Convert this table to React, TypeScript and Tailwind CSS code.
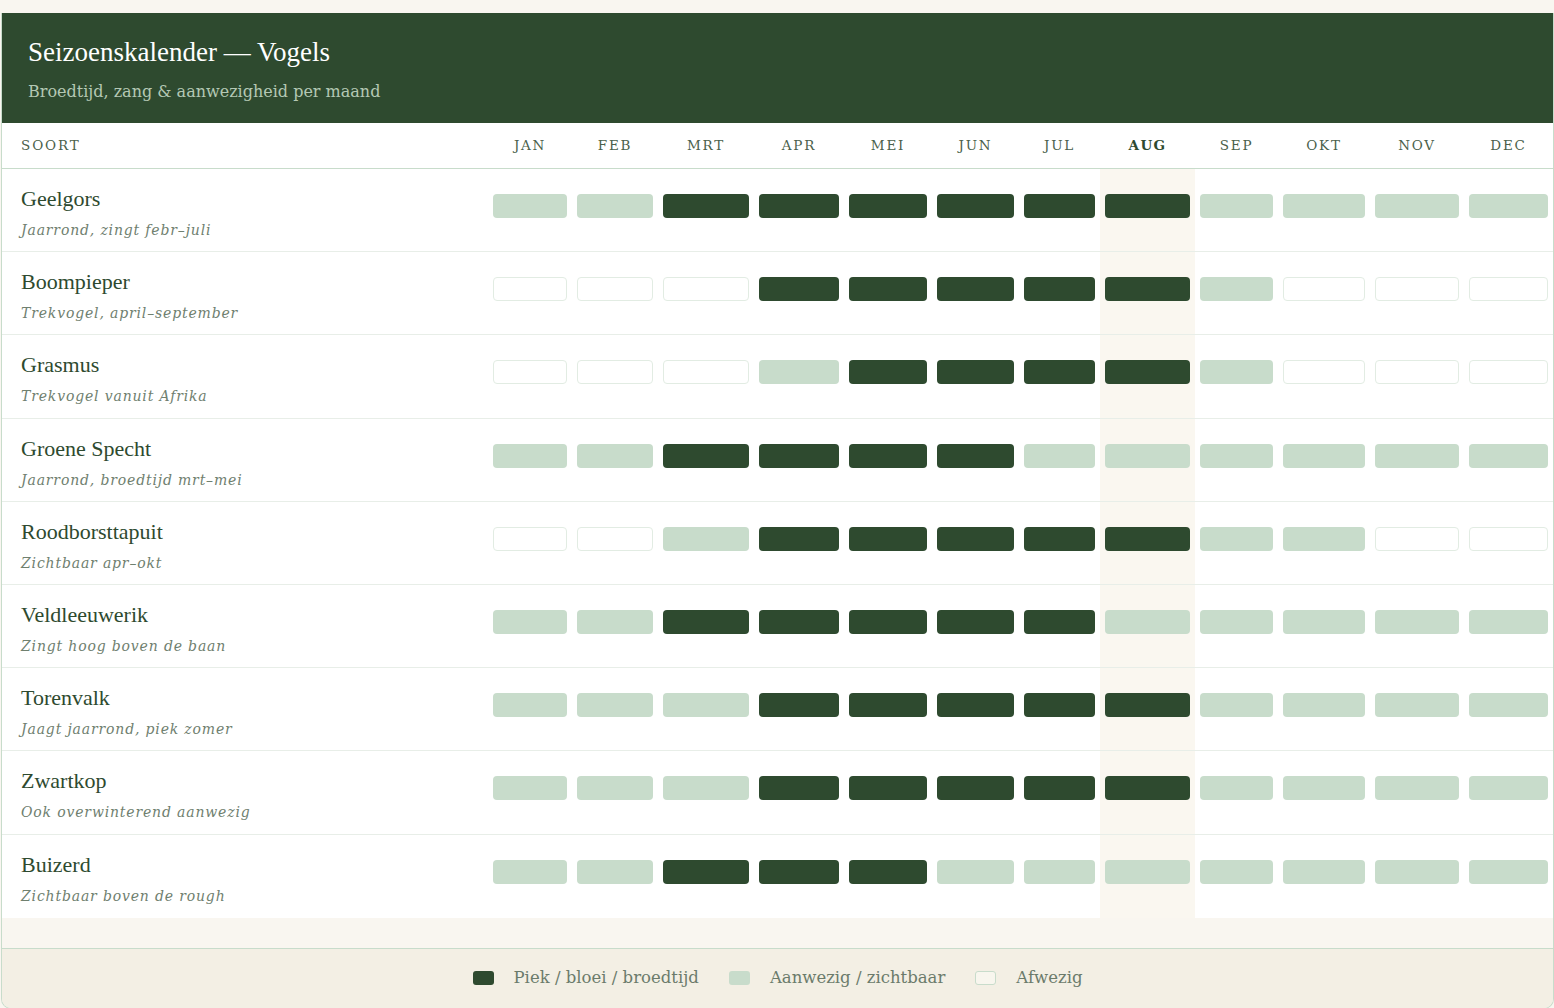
type Level = 'D' | 'L' | 'E'

const months = ['JAN', 'FEB', 'MRT', 'APR', 'MEI', 'JUN', 'JUL', 'AUG', 'SEP', 'OKT', 'NOV', 'DEC']

const birds: { name: string; note: string; levels: string }[] = [
  { name: 'Geelgors', note: 'Jaarrond, zingt febr–juli', levels: 'LLDDDDDDLLLL' },
  { name: 'Boompieper', note: 'Trekvogel, april–september', levels: 'EEEDDDDDLEEE' },
  { name: 'Grasmus', note: 'Trekvogel vanuit Afrika', levels: 'EEELDDDDLEEE' },
  { name: 'Groene Specht', note: 'Jaarrond, broedtijd mrt–mei', levels: 'LLDDDDLLLLLL' },
  { name: 'Roodborsttapuit', note: 'Zichtbaar apr–okt', levels: 'EELDDDDDLLEE' },
  { name: 'Veldleeuwerik', note: 'Zingt hoog boven de baan', levels: 'LLDDDDDLLLLL' },
  { name: 'Torenvalk', note: 'Jaagt jaarrond, piek zomer', levels: 'LLLDDDDDLLLL' },
  { name: 'Zwartkop', note: 'Ook overwinterend aanwezig', levels: 'LLLDDDDDLLLL' },
  { name: 'Buizerd', note: 'Zichtbaar boven de rough', levels: 'LLDDDLLLLLLL' },
]

const grid =
  'grid grid-cols-[486px_84px_86px_96px_90px_88px_87px_81px_95px_83px_92px_94px_89px]'

const display = { fontFamily: '"Liberation Serif", "DejaVu Serif", serif' }
const body = { fontFamily: '"DejaVu Serif", "Liberation Serif", serif' }

function Bar({ level }: { level: Level }) {
  if (level === 'D') return <div className="h-[24px] rounded-[4px] bg-[#2e4a2f]" />
  if (level === 'L') return <div className="h-[24px] rounded-[4px] bg-[#c8dccb]" />
  return <div className="h-[24px] rounded-[4px] border border-[#e2ece3] bg-white" />
}

export default function App() {
  return (
    <div className="min-h-screen w-full overflow-hidden bg-[#f9f6f0] pt-[13px] pl-[1px]">
      <div className="w-[1553px] overflow-hidden rounded-b-[10px] border-x border-b border-[#c8dccb] bg-[#f9f6f0]">
        <div className="bg-[#2e4a2f] px-[26px] pt-[24px] pb-[19px]">
          <h1 className="text-[27px] leading-[30px] text-white" style={display}>
            Seizoenskalender — Vogels
          </h1>
          <p className="mt-[13px] text-[16px] leading-[24px] text-[#b4c8b4]" style={body}>
            Broedtijd, zang &amp; aanwezigheid per maand
          </p>
        </div>

        <div className={`${grid} h-[46px] border-b border-[#c8dccb] bg-white`} style={body}>
          <div className="flex items-center pl-[19px] text-[13.5px] tracking-[0.14em] text-[#4b5f4b]">
            SOORT
          </div>
          {months.map(m => (
            <div
              key={m}
              className={
                m === 'AUG'
                  ? 'flex items-center justify-center text-[13.5px] font-bold tracking-[0.1em] text-[#2e4a2f]'
                  : 'flex items-center justify-center text-[13.5px] tracking-[0.13em] text-[#4b5f4b]'
              }
            >
              {m}
            </div>
          ))}
        </div>

        <div className="bg-white">
          {birds.map((b, i) => (
            <div
              key={b.name}
              className={`${grid} h-[83.2px] ${i < birds.length - 1 ? 'border-b border-[#e8eee8]' : ''}`}
            >
              <div className="pl-[19px] pt-[16px]">
                <div className="text-[22px] leading-[28px] text-[#2e4a2f]" style={display}>
                  {b.name}
                </div>
                <div
                  className="mt-[6px] text-[14px] italic leading-[22px] tracking-[0.06em] text-[#6f806f]"
                  style={body}
                >
                  {b.note}
                </div>
              </div>
              {b.levels.split('').map((l, j) => (
                <div key={j} className={j === 7 ? 'bg-[#faf7f0] px-[5px] pt-[25px]' : 'px-[5px] pt-[25px]'}>
                  <Bar level={l as Level} />
                </div>
              ))}
            </div>
          ))}
        </div>

        <div className="h-[30px]" />

        <div
          className="flex h-[60px] items-center justify-center gap-[30px] border-t border-[#c8dccb] bg-[#f3efe4] text-[16.5px] text-[#6b7b6b]"
          style={body}
        >
          <div className="flex items-center gap-[20px]">
            <span className="h-[14px] w-[21px] rounded-[3px] bg-[#2e4a2f]" />
            <span>Piek / bloei / broedtijd</span>
          </div>
          <div className="flex items-center gap-[20px]">
            <span className="h-[14px] w-[21px] rounded-[3px] bg-[#c8dccb]" />
            <span>Aanwezig / zichtbaar</span>
          </div>
          <div className="flex items-center gap-[20px]">
            <span className="h-[14px] w-[21px] rounded-[3px] border border-[#c8dccb] bg-[#f8f6ee]" />
            <span>Afwezig</span>
          </div>
        </div>
      </div>
    </div>
  )
}
